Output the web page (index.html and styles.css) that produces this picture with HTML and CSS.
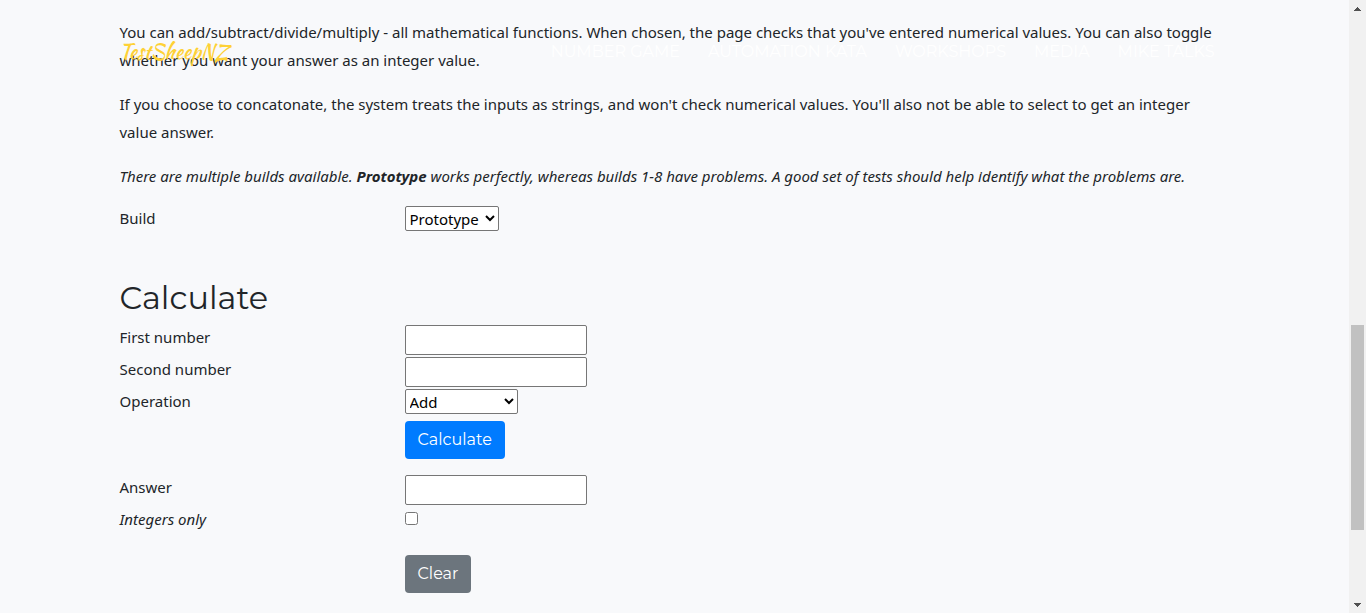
FILE: index.html
```html
<!DOCTYPE html>
<html lang="en">
<head>
<meta charset="utf-8">
<meta name="viewport" content="width=device-width, initial-scale=1">
<title>TestSheepNZ - Basic Calculator</title>
<link rel="stylesheet" href="styles.css">
</head>
<body>
<div class="page">
  <header class="navbar">
    <div class="container navbar-inner">
      <a class="brand" href="#top">TestSheepNZ</a>
      <nav class="nav">
        <a href="#number-game">NUMBER GAME</a>
        <a href="#automation">AUTOMATION KATA</a>
        <a href="#workshops">WORKSHOPS</a>
        <a href="#media">MEDIA</a>
        <a href="#talks">MIKE TALKS</a>
      </nav>
    </div>
  </header>
  <main class="container content" id="top">
    <p>You can add/subtract/divide/multiply - all mathematical functions. When chosen, the page checks that you've entered numerical values. You can also toggle whether you want your answer as an integer value.</p>
    <p>If you choose to concatonate, the system treats the inputs as strings, and won't check numerical values. You'll also not be able to select to get an integer value answer.</p>
    <p class="note">There are multiple builds available. <b>Prototype</b> works perfectly, whereas builds 1-8 have problems. A good set of tests should help identify what the problems are.</p>
    <form class="form">
      <div class="row">
        <label for="build">Build</label>
        <select class="build" id="build"><option>Prototype</option><option>1</option><option>2</option></select>
      </div>
      <h2>Calculate</h2>
      <div class="row">
        <label for="first">First number</label>
        <input class="text" type="text" id="first">
      </div>
      <div class="row">
        <label for="second">Second number</label>
        <input class="text" type="text" id="second">
      </div>
      <div class="row">
        <label for="operation">Operation</label>
        <select class="operation" id="operation"><option>Add</option><option>Subtract</option><option>Multiply</option><option>Divide</option><option>Concatenate</option></select>
      </div>
      <div class="row actions">
        <button class="btn primary" type="button">Calculate</button>
      </div>
      <div class="row">
        <label for="answer">Answer</label>
        <input class="text" type="text" id="answer">
      </div>
      <div class="row">
        <label class="note" for="integers">Integers only</label>
        <input class="check" type="checkbox" id="integers">
      </div>
      <div class="row actions clear">
        <button class="btn secondary" type="reset">Clear</button>
      </div>
    </form>
  </main>
</div>
<div class="scrollbar" aria-hidden="true">
  <svg class="arrow" viewBox="0 0 17 17" shape-rendering="crispEdges"><path d="M8 7h1v1h1v1h1v1h1v1H5v-1h1V9h1V8h1z"/></svg>
  <div class="track"><div class="thumb"></div></div>
  <svg class="arrow" viewBox="0 0 17 17" shape-rendering="crispEdges"><path d="M5 7h7v1h-1v1h-1v1H9v1H8v-1H7V9H6V8H5z"/></svg>
</div>
</body>
</html>
```
FILE: styles.css
```css
* { box-sizing: border-box; }

body {
  display: flex;
  min-height: 100vh;
  margin: 0;
  background: #f8f9fb;
  color: #212529;
  font: 15px/24px "Segoe UI", "Noto Sans", sans-serif;
}

.page { position: relative; flex: 1; min-width: 0; }

.container { max-width: 1140px; margin: 0 auto; padding: 0 15px; }

.navbar { position: absolute; top: 36px; left: 0; right: 0; }

.navbar-inner { display: flex; align-items: center; justify-content: space-between; }

.brand {
  color: #fed136;
  font: 400 20px/32px "Kaushan Script", Lato, cursive;
  text-decoration: none;
}

.nav { display: flex; gap: 28px; padding-right: 15px; }

.nav a {
  color: #fff;
  font: 400 16px/32px Montserrat, Inter, sans-serif;
  text-decoration: none;
}

.content { padding-top: 18px; }

p { margin: 0 0 16px; line-height: 28px; }

.note { font-style: italic; }

.row {
  display: grid;
  grid-template-columns: 285px 1fr;
  align-items: start;
  justify-items: start;
  min-height: 32px;
}

h2 {
  margin: 40px 0 7px;
  font: 400 32px/40px Montserrat, Inter, sans-serif;
}

select, .text {
  border: 1px solid #767676;
  border-radius: 2px;
  background-color: #fff;
  color: #000;
  font: 15px/24px "Segoe UI", "Noto Sans", sans-serif;
}

select { height: 25px; padding: 0; }

.build { width: 94px; }

.operation { width: 113px; }

.text { width: 182px; height: 30px; }

.check { margin: 5px 0 0; }

.actions { min-height: 54px; }

.actions .btn { grid-column: 2; }

.clear { margin-top: 16px; }

.btn {
  height: 38px;
  padding: 0 13px;
  border: 0;
  border-radius: 4px;
  color: #fff;
  font: 400 16px/24px Montserrat, Inter, sans-serif;
}

.primary { background: #007bff; }

.secondary { background: #6c757d; }

.scrollbar { display: flex; flex-direction: column; width: 17px; background: #f1f1f1; }

.arrow { width: 17px; height: 17px; fill: #505050; }

.track { display: flex; flex: 1; flex-direction: column; padding: 0 2px; }

.track::before { content: ""; flex: 308; }

.track::after { content: ""; flex: 66; }

.thumb { flex: 205; background: #c1c1c1; }
```
